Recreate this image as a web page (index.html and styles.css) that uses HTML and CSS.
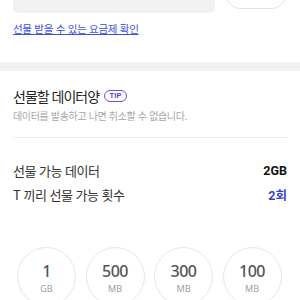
FILE: index.html
```html
<!DOCTYPE html>
<html lang="ko">
<head>
<meta charset="utf-8">
<link rel="stylesheet" href="styles.css">
</head>
<body>
<div class="top">
  <div class="input">휴대폰 번호 입력</div>
  <div class="btn">주소록</div>
</div>
<a class="link" href="#">선물 받을 수 있는 요금제 확인</a>
<div class="band"></div>
<div class="section">
  <div class="title">선물할 데이터양 <span class="tip">TIP</span></div>
  <div class="sub">데이터를 발송하고 나면 취소할 수 없습니다.</div>
  <div class="divider"></div>
  <div class="row"><span class="label">선물 가능 데이터</span><span class="val">2GB</span></div>
  <div class="row"><span class="label">T 끼리 선물 가능 횟수</span><span class="val blue">2회</span></div>
  <div class="chips">
    <div class="chip"><span class="num">1</span><span class="unit">GB</span></div>
    <div class="chip"><span class="num">500</span><span class="unit">MB</span></div>
    <div class="chip"><span class="num">300</span><span class="unit">MB</span></div>
    <div class="chip"><span class="num">100</span><span class="unit">MB</span></div>
  </div>
</div>
</body>
</html>
```

FILE: styles.css
```css
html, body {
  margin: 0;
  padding: 0;
  background: #fff;
  overflow: hidden;
}
body {
  font-family: "Noto Sans CJK KR", "Noto Sans", sans-serif;
  color: #222;
}
.top {
  display: flex;
  align-items: flex-start;
  gap: 11px;
  padding: 0 13px;
  margin-top: -27px;
}
.input {
  width: 202px;
  height: 40px;
  box-sizing: border-box;
  background: #f1f1f1;
  border-radius: 5px;
  padding: 0 12px;
  font-size: 12px;
  line-height: 26px;
  color: #a0a0a0;
}
.btn {
  width: 60px;
  height: 36px;
  box-sizing: border-box;
  border: 1px solid #e2e2e2;
  border-radius: 14px;
  text-align: center;
  font-size: 12px;
  line-height: 28px;
  color: #333;
}
.link {
  display: block;
  margin: 9px 13px 0;
  font-size: 10.5px;
  line-height: 13px;
  letter-spacing: -0.3px;
  color: #3d4fe0;
  text-decoration: underline;
  width: max-content;
}
.band {
  margin-top: 27px;
  height: 9px;
  background: #f1f1f3;
}
.section {
  padding: 0 13px;
}
.title {
  margin-top: 15px;
  font-size: 14px;
  line-height: 20px;
  letter-spacing: -1px;
  color: #222;
  display: flex;
  align-items: center;
  gap: 5px;
}
.tip {
  display: inline-block;
  border: 1px solid #6a4fe0;
  border-radius: 7px;
  color: #5a3fd8;
  font-family: "Roboto", "Noto Sans", sans-serif;
  font-weight: 700;
  font-size: 7.5px;
  line-height: 10px;
  padding: 0 4.5px;
  letter-spacing: 0;
}
.sub {
  font-size: 10px;
  line-height: 14px;
  letter-spacing: -0.35px;
  color: #a6a6a6;
  margin-top: 3px;
}
.divider {
  margin-top: 14px;
  height: 1px;
  background: #ececec;
}
.row {
  display: flex;
  justify-content: space-between;
  align-items: center;
  height: 24px;
}
.divider + .row {
  margin-top: 20px;
}
.label {
  font-size: 13px;
  letter-spacing: -0.5px;
  color: #333;
}
.val {
  font-family: "Roboto", "Noto Sans CJK KR", sans-serif;
  font-weight: 700;
  font-size: 12.5px;
  color: #111;
}
.val.blue {
  color: #3b3fd8;
}
.chips {
  display: flex;
  gap: 9.5px;
  padding-left: 4px;
  margin-top: 41px;
}
.chip {
  width: 59px;
  height: 59px;
  flex: none;
  box-sizing: border-box;
  border: 1px solid #e6e6e6;
  border-radius: 50%;
  display: flex;
  flex-direction: column;
  align-items: center;
  padding-top: 13px;
}
.num {
  font-family: "Noto Sans", sans-serif;
  font-weight: 500;
  font-size: 16px;
  line-height: 20px;
  color: #555;
  letter-spacing: -0.5px;
}
.unit {
  font-family: "Noto Sans", sans-serif;
  font-size: 9px;
  line-height: 12px;
  color: #a0a0a0;
  margin-top: 2px;
}
```
